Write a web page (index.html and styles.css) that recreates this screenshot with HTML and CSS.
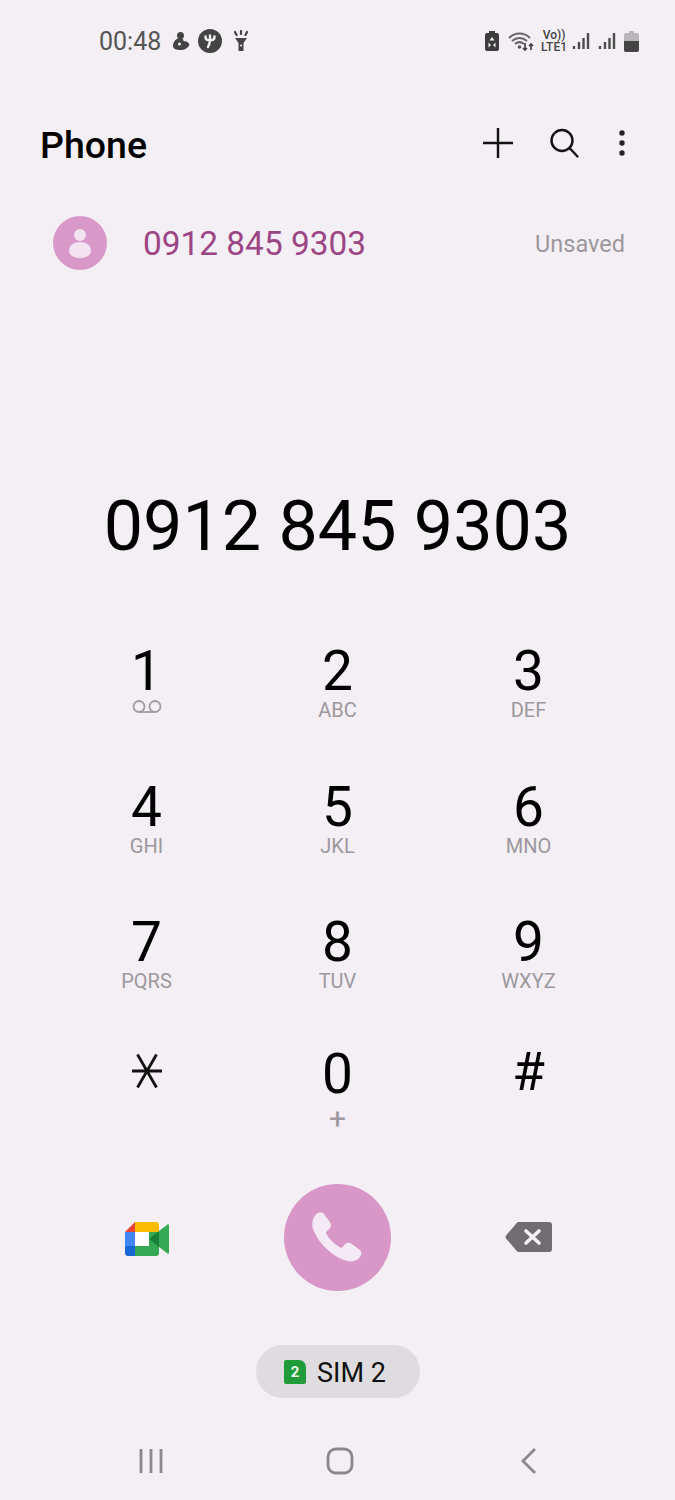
FILE: index.html
```html
<!DOCTYPE html>
<html lang="en">
<head>
  <meta charset="utf-8">
  <title>Phone</title>
  <link rel="stylesheet" href="styles.css">
</head>
<body>
  <div class="phone">
    <!-- Status bar -->
    <div class="status-bar">
      <div class="status-left">
        <span class="clock">00:48</span>
        <svg class="ic-game" width="20" height="20" viewBox="0 0 20 20"><circle cx="9.500" cy="4.500" r="3.500" fill="#444"/><path d="M2 15c0-4 3-8 7-8 2 0 3.500 1 3.500 3 2.500 0 5 1 6 3.500-1 3.500-5 5.500-9 5.500-4 0-7.500-1-7.500-4z" fill="#444"/><circle cx="8.500" cy="13" r="1.500" fill="#f3eff4"/></svg>
        <svg class="ic-badge" width="24" height="24" viewBox="0 0 24 24"><circle cx="12" cy="12" r="12" fill="#444"/><path d="M7.500 7.500c0 2.500 1 3.500 2.500 3.500h4c1.500 0 2.500-1 2.500-3.500M12 6.500v4.500c0 3-1 5-2 7" fill="none" stroke="#f3eff4" stroke-width="2.400" stroke-linecap="round"/></svg>
        <svg class="ic-torch" width="18" height="22" viewBox="0 0 18 22"><path d="M3 8h12l-3.500 5v8h-5v-8z" fill="#444"/><circle cx="9" cy="15.500" r="1" fill="#f3eff4"/><path d="M9 1v3M3 2l1.500 3M15 2l-1.500 3" stroke="#444" stroke-width="2.200" stroke-linecap="round"/></svg>
      </div>
      <div class="status-right">
        <svg width="16" height="24" viewBox="0 0 16 24"><path d="M5 2h6v2h2a2 2 0 0 1 2 2v14a2 2 0 0 1-2 2H3a2 2 0 0 1-2-2V6a2 2 0 0 1 2-2h2z" fill="#3d3d3d"/><path d="M8 8l2.500 3.500h-5zM4.500 13.500l2.500 2.500-2.500 2.500zM11.500 13.500v5L9 16z" fill="#f3eff4"/></svg>
        <svg class="ic-wifi" width="27" height="24" viewBox="0 0 27 24"><path d="M1 9c6-6 15-6 21 0M4 12c4.500-4 10.500-4 15 0M7 15c3-2.500 6-2.500 9 0" fill="none" stroke="#666" stroke-width="2"/><circle cx="11.500" cy="18" r="1.800" fill="#555"/><path d="M17 14v7M15 19l2 2 2-2M23 21v-6M21 17l2-2 2 2" fill="none" stroke="#444" stroke-width="1.700"/></svg>
        <div class="volte"><span>Vo))</span><span>LTE1</span></div>
        <svg class="ic-signal" width="18" height="20" viewBox="0 0 18 20"><path d="M2 15v3M7 11v7M11.500 7v11M16 2v16" stroke="#4d4d4d" stroke-width="2.400"/></svg>
        <svg class="ic-signal" width="18" height="20" viewBox="0 0 18 20"><path d="M2 15v3M7 11v7M11.500 7v11M16 2v16" stroke="#4d4d4d" stroke-width="2.400"/></svg>
        <svg class="ic-battery" width="15" height="22" viewBox="0 0 15 22"><path d="M5 1h5v2h3a2 2 0 0 1 2 2v15a2 2 0 0 1-2 2H2a2 2 0 0 1-2-2V5a2 2 0 0 1 2-2h3z" fill="#b9b6b9"/><path d="M0 11h15v9a2 2 0 0 1-2 2H2a2 2 0 0 1-2-2z" fill="#444"/></svg>
      </div>
    </div>

    <!-- App bar -->
    <div class="app-bar">
      <h1>Phone</h1>
      <div class="app-actions">
        <svg width="32" height="32" viewBox="0 0 32 32"><path d="M16 1v30M1 16h30" stroke="#111" stroke-width="2.400"/></svg>
        <svg width="32" height="32" viewBox="0 0 32 32"><circle cx="14" cy="13.500" r="10.500" fill="none" stroke="#111" stroke-width="2.400"/><path d="M21.500 21l8 8.500" stroke="#111" stroke-width="2.400" stroke-linecap="round"/></svg>
        <svg class="ic-more" width="8" height="28" viewBox="0 0 8 28"><circle cx="4" cy="4" r="2.700" fill="#222"/><circle cx="4" cy="14" r="2.700" fill="#222"/><circle cx="4" cy="24" r="2.700" fill="#222"/></svg>
      </div>
    </div>

    <!-- Matched contact -->
    <div class="match-row">
      <svg class="avatar" width="54" height="54" viewBox="0 0 54 54"><circle cx="27" cy="27" r="27" fill="#d898c8"/><circle cx="27" cy="19" r="6" fill="#f3e3f0"/><path d="M16 35c0-6 5-9 11-9s11 3 11 9c0 4-5 7-11 7s-11-3-11-7z" fill="#f3e3f0"/></svg>
      <span class="match-number">0912 845 9303</span>
      <span class="match-tag">Unsaved</span>
    </div>

    <div class="dialed">0912 845 9303</div>

    <!-- Keypad -->
    <div class="keypad">
      <div class="key">
        <span class="digit">1</span>
        <svg class="voicemail" width="30" height="14" viewBox="0 0 30 14"><circle cx="7" cy="6.500" r="5.500" fill="none" stroke="#a09ca2" stroke-width="1.800"/><circle cx="23" cy="6.500" r="5.500" fill="none" stroke="#a09ca2" stroke-width="1.800"/><path d="M7 12h16" stroke="#a09ca2" stroke-width="1.800"/></svg>
      </div>
      <div class="key"><span class="digit">2</span><span class="letters">ABC</span></div>
      <div class="key"><span class="digit">3</span><span class="letters">DEF</span></div>
      <div class="key"><span class="digit">4</span><span class="letters">GHI</span></div>
      <div class="key"><span class="digit">5</span><span class="letters">JKL</span></div>
      <div class="key"><span class="digit">6</span><span class="letters">MNO</span></div>
      <div class="key"><span class="digit">7</span><span class="letters">PQRS</span></div>
      <div class="key"><span class="digit">8</span><span class="letters">TUV</span></div>
      <div class="key"><span class="digit">9</span><span class="letters">WXYZ</span></div>
      <div class="key key-last">
        <svg class="star" width="32" height="36" viewBox="0 0 32 36"><path d="M1 18h30M6.500 1.500l19 33M25.500 1.500l-19 33" stroke="#111" stroke-width="2.800"/></svg>
      </div>
      <div class="key key-last"><span class="digit">0</span><span class="plus">+</span></div>
      <div class="key key-last"><span class="digit hash">#</span></div>
    </div>

    <!-- Call actions -->
    <div class="call-row">
      <svg class="meet" width="44" height="36" viewBox="0 0 44 36">
        <path d="M10 2h21a3 3 0 0 1 3 3v7H10z" fill="#fbbc04"/>
        <path d="M10 2v10H0z" fill="#ea4335"/>
        <path d="M0 12h10v14H0z" fill="#4285f4"/>
        <path d="M0 26h10v10H3a3 3 0 0 1-3-3z" fill="#1967d2"/>
        <path d="M10 26h24v7a3 3 0 0 1-3 3H10z" fill="#34a853"/>
        <path d="M24 12h10v14H24z" fill="#34a853"/>
        <path d="M24 19l10-8v16z" fill="#188038"/>
        <path d="M34 11l8-6a1 1 0 0 1 2 .5v27a1 1 0 0 1-2 .5l-8-6z" fill="#34a853"/>
        <path d="M10 12h14v14H10z" fill="#fff"/>
      </svg>
      <div class="call-btn">
        <svg width="60" height="60" viewBox="0 0 54 54"><path d="M7 6c2-2 5-3 7-1l6 8c1 2 1 4-1 6l-3 3c2 5 8 11 14 14l3-3c2-2 4-2 6-1l8 6c2 2 1 5-1 7-3 3-8 4-13 2C21 43 10 32 5 20 3 15 4 9 7 6z" fill="#f3eaf6"/></svg>
      </div>
      <svg class="backspace" width="48" height="32" viewBox="0 0 48 32"><path d="M14 1h30a3 3 0 0 1 3 3v24a3 3 0 0 1-3 3H14a3 3 0 0 1-2.500-1.200L1 17.500a3 3 0 0 1 0-3L11.500 2.200A3 3 0 0 1 14 1z" fill="#6f6d70"/><path d="M21 10l13 12M34 10L21 22" stroke="#f5f0f5" stroke-width="3.600" stroke-linecap="round"/></svg>
    </div>

    <!-- SIM selector -->
    <div class="sim-wrap">
      <div class="sim-pill">
        <span class="sim-badge">2</span>
        <span class="sim-label">SIM 2</span>
      </div>
    </div>

    <!-- Navigation bar -->
    <div class="nav-bar">
      <svg width="24" height="26" viewBox="0 0 24 26"><path d="M2 1v24M12 1v24M22 1v24" stroke="#8a888b" stroke-width="2.800"/></svg>
      <svg class="ic-home" width="28" height="28" viewBox="0 0 28 28"><rect x="2" y="2" width="24" height="24" rx="8" fill="none" stroke="#8a888b" stroke-width="2.800"/></svg>
      <svg width="18" height="28" viewBox="0 0 18 28"><path d="M15 2L3 14l12 12" fill="none" stroke="#8a888b" stroke-width="2.800"/></svg>
    </div>
  </div>
</body>
</html>
```

FILE: styles.css
```css
* {
  box-sizing: border-box;
}

html, body {
  margin: 0;
  padding: 0;
}

body {
  background-color: #f3eff4;
  font-family: Roboto, "Liberation Sans", sans-serif;
  color: #111;
}

.phone {
  width: 675px;
  height: 1500px;
  overflow: hidden;
  display: flex;
  flex-direction: column;
}

.status-bar {
  height: 82px;
  padding: 0 36px 0 99px;
  display: flex;
  align-items: center;
  justify-content: space-between;
}

.status-left, .status-right {
  display: flex;
  align-items: center;
}

.clock {
  font-size: 25px;
  color: #555;
  margin-right: 10px;
}

.ic-badge {
  margin: 0 10px 0 7px;
}

.status-right svg {
  display: block;
}

.ic-wifi {
  margin-left: 8px;
}

.volte {
  display: flex;
  flex-direction: column;
  align-items: center;
  margin: 0 5px 0 6px;
  font-size: 12px;
  line-height: 12px;
  font-weight: 500;
  color: #444;
}

.ic-signal {
  margin-right: 8px;
}

.app-bar {
  height: 122px;
  padding: 0 40px;
  display: flex;
  align-items: center;
  justify-content: space-between;
}

.app-bar h1 {
  margin: 0;
  padding-top: 3px;
  font-size: 37.500px;
  font-weight: 500;
  color: #000;
}

.app-actions {
  display: flex;
  align-items: center;
  gap: 34px;
  padding-right: 9px;
}

.ic-more {
  margin-left: 4px;
}

.match-row {
  height: 80px;
  padding: 0 50px 2px 53px;
  display: flex;
  align-items: center;
}

.avatar {
  flex: none;
}

.match-number {
  margin-left: 36px;
  font-size: 33.400px;
  color: #9c4585;
  flex: 1;
}

.match-tag {
  margin-top: 2px;
  font-size: 23.500px;
  color: #9b979c;
}

.dialed {
  margin-top: 186px;
  height: 112px;
  line-height: 112px;
  text-align: center;
  font-size: 70px;
  color: #000;
}

.keypad {
  margin-top: 55px;
  padding: 0 51px;
  display: grid;
  grid-template-columns: repeat(3, 191px);
  grid-auto-rows: 135.500px;
}

.key {
  padding-top: 7px;
  display: flex;
  flex-direction: column;
  align-items: center;
}

.digit {
  font-size: 55px;
  line-height: 54px;
  color: #000;
}

.letters {
  font-size: 20px;
  line-height: 24px;
  color: #9c989d;
}

.voicemail {
  margin-top: 2px;
}

.plus {
  font-size: 30px;
  line-height: 30px;
  margin-top: 3px;
  color: #9c989d;
}

.star {
  margin-top: 6px;
}

.hash {
  font-size: 53px;
  margin-top: -2px;
}

.key-last {
  margin-top: -4px;
}

.call-row {
  margin-top: 5px;
  padding: 0 51px;
  display: grid;
  grid-template-columns: repeat(3, 191px);
  justify-items: center;
  align-items: center;
}

.backspace {
  margin-top: -2px;
}

.call-btn {
  width: 107px;
  height: 107px;
  border-radius: 50%;
  background-color: #d997c8;
  display: flex;
  align-items: center;
  justify-content: center;
}

.sim-wrap {
  margin-top: 54px;
  display: flex;
  justify-content: center;
}

.sim-pill {
  width: 164px;
  height: 53px;
  border-radius: 27px;
  background-color: #dfdcdf;
  display: flex;
  align-items: center;
  justify-content: center;
  gap: 11px;
  padding-right: 5px;
  font-size: 27px;
  color: #111;
}

.sim-label {
  padding-top: 2px;
}

.sim-badge {
  width: 22px;
  height: 24px;
  background-color: #1f9b3a;
  border-radius: 2px 7px 2px 2px;
  color: #e8f6ea;
  font-size: 15px;
  font-weight: 700;
  text-align: center;
  line-height: 24px;
}

.nav-bar {
  margin-top: 49px;
  padding: 0 137px 0 139px;
  display: flex;
  align-items: center;
  justify-content: space-between;
}

.ic-home {
  margin-right: 3px;
}
```
